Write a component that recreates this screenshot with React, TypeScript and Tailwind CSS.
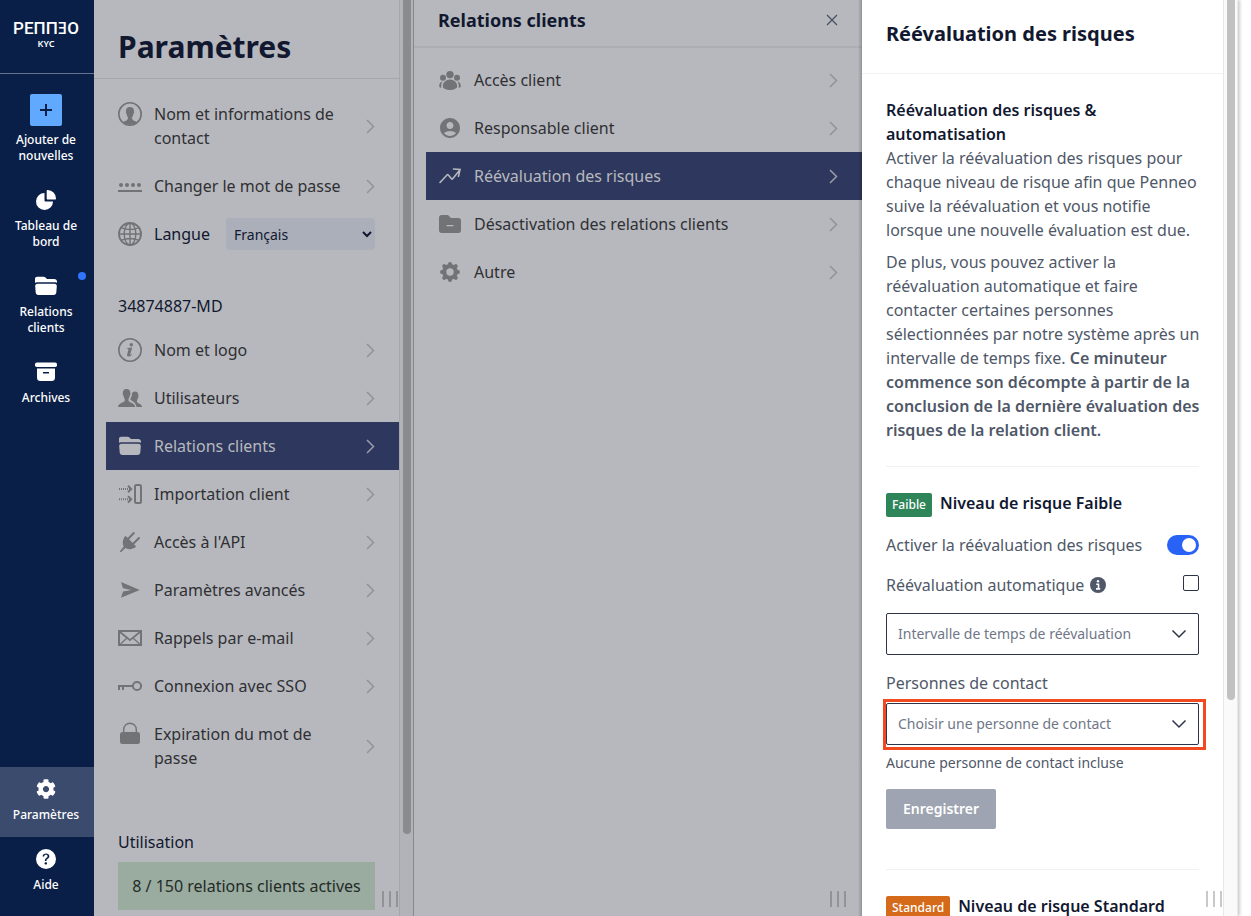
import React, { useState } from 'react';
import { FaCog } from 'react-icons/fa';
import { MdAccountCircle } from 'react-icons/md';
import { BsQuestionCircleFill } from 'react-icons/bs';

interface MenuItem {
  label: string;
  icon: React.ReactNode;
  active?: boolean;
}

const Svg = ({ children, size = 24 }: { children: React.ReactNode; size?: number }) => (
  <svg width={size} height={size} viewBox="0 0 24 24" fill="currentColor" aria-hidden="true">
    {children}
  </svg>
);

const FolderIcon = () => (
  <Svg>
    <path d="M1 8.700V5c0-1.400.9-2.300 2.300-2.300h6.200c.8 0 1.400.3 2 .9l1.500 1.500h7.200c1.700 0 2.800 1 2.800 2.600v1L21 8.300H3.200z" />
    <path d="M3.600 9.800h16.800c1.500 0 2.600 1 2.400 2.500l-.5 6.200c-.1 1.500-1.200 2.500-2.700 2.500H4.400c-1.500 0-2.600-1-2.700-2.500l-.5-6.200c-.2-1.500.9-2.500 2.400-2.500z" />
  </Svg>
);

const PieIcon = () => (
  <Svg>
    <path d="M10.500 5v7.500c0 .6.400 1 1 1H19A8.500 8.500 0 1 1 10.500 5z" />
    <path d="M12.700 3c0-.7.300-1 1-1A8.500 8.500 0 0 1 22 10.500c0 .7-.3 1-1 1h-7.300c-.7 0-1-.3-1-1z" />
  </Svg>
);

const ArchiveIcon = () => (
  <Svg>
    <rect x="1" y="2.500" width="22" height="4.600" rx="1.800" />
    <path fillRule="evenodd" d="M3 8.500h18v9a3.500 3.500 0 0 1-3.500 3.500h-11A3.500 3.500 0 0 1 3 17.500zm6 3.500v1.600h6V12z" />
  </Svg>
);

const AvatarIcon = () => (
  <Svg>
    <circle cx="12" cy="12" r="11.200" fill="none" stroke="currentColor" strokeWidth="1.600" />
    <path d="M12 5c-2.900 0-4.300 1.900-4 4.600-.4.700.1 2 .7 2.600.2 1.500.7 2.600 1.300 3.300-.1 1.300-.4 2.200-1.500 2.900-1.400.7-2.700 1-3.700 1.900A11 11 0 0 0 12 23a11 11 0 0 0 7.200-2.700c-1-.9-2.300-1.200-3.700-1.900-1.100-.7-1.400-1.600-1.500-2.900.6-.7 1.100-1.800 1.300-3.300.6-.6 1.100-1.900.7-2.600C16.300 6.900 14.900 5 12 5z" />
  </Svg>
);

const PasswordIcon = () => (
  <Svg>
    <circle cx="3" cy="11" r="2" />
    <circle cx="9" cy="11" r="2" />
    <circle cx="15" cy="11" r="2" />
    <circle cx="21" cy="11" r="2" />
    <rect y="16" width="24" height="2" />
  </Svg>
);

const GlobeIcon = () => (
  <Svg>
    <g fill="none" stroke="currentColor" strokeWidth="1.400">
      <circle cx="12" cy="12" r="11" strokeWidth="1.800" />
      <ellipse cx="12" cy="12" rx="5.800" ry="11" />
      <path d="M12 1v22M1 12h22M3.500 5.800c5 2 12 2 17 0M3.500 18.200c5-2 12-2 17 0" />
    </g>
  </Svg>
);

const InfoIcon = () => (
  <Svg>
    <circle cx="12" cy="12" r="11.200" fill="none" stroke="currentColor" strokeWidth="1.600" />
    <circle cx="13.300" cy="6.800" r="1.700" />
    <path d="M9.200 10l5-.6-2 7.200c-.1.500.2.600.6.300l1-1 .5.400c-1 1.500-2.200 2.200-3.500 2.200-1.500 0-2-.8-1.600-2.300l1.200-4.400c.2-.7 0-.9-1.400-1z" />
  </Svg>
);

const UsersIcon = () => (
  <Svg>
    <path d="M8.500 3C5.700 3 4.600 5 4.900 7.400c-.4.600 0 1.800.6 2.300.2 1.400.7 2.300 1.200 2.900v2.200C6.200 16.800.3 16.800 0 21h17.200c-.3-4.200-6-4.200-6.700-6.200v-2.200c.5-.6 1-1.500 1.200-2.900.6-.5 1-1.700.6-2.300C12.600 5 11.300 3 8.500 3z" />
    <path d="M16.800 5.500c-1.300 0-2.500.8-2.900 2.300.3 1.500-.1 2.600-.8 3.300-.2 1-.5 1.700-.9 2.200 1 1.800 5.400 2.300 6.400 7.700H24c-.2-3.500-4.500-3.300-5-5v-1.800c.4-.5.8-1.300.9-2.400.5-.4.800-1.400.5-1.900.2-2.500-1-4.400-3.600-4.400z" />
  </Svg>
);

const ImportIcon = () => (
  <Svg>
    <g fill="none" stroke="currentColor" strokeWidth="2">
      <rect x="17" y="3" width="6" height="18" rx="1.500" />
      <path d="M1 7h11M1 17.300h11" strokeDasharray="1 1" />
      <path d="M10 3.800L13.200 7 10 10.200M10 14.100l3.200 3.200-3.200 3.200" />
    </g>
  </Svg>
);

const PlugIcon = () => (
  <Svg>
    <path d="M6.500 7.300l9.900 9.900c-2.400 2.300-6.200 2.700-9 .9L3 22.300l-1.300-.8 4-5c-1.500-2.700-1.200-6.600.8-9.200z" />
    <path d="M10.500 8.500L15.800 3M15.500 13.500L21 8" fill="none" stroke="currentColor" strokeWidth="2" strokeLinecap="round" />
    <path d="M5.800 7.500l2-1.500 10.200 10.200-1.500 2z" />
  </Svg>
);

const PlaneIcon = () => (
  <Svg>
    <path d="M3 4l18.700 8L3 19.800l2-6.200 8.500-1.600L5 10.200z" />
  </Svg>
);

const MailIcon = () => (
  <Svg>
    <g fill="none" stroke="currentColor">
      <rect x="1" y="5" width="22" height="14" strokeWidth="2" />
      <path d="M2 6l10 8.200L22 6" strokeWidth="1.800" />
      <path d="M2.500 18L9 12M21.500 18L15 12" strokeWidth="1.200" />
    </g>
  </Svg>
);

const KeyIcon = () => (
  <Svg>
    <g fill="none" stroke="currentColor" strokeWidth="2">
      <circle cx="19" cy="12" r="4.100" />
      <path d="M0 12h14.800M1 12v4M5 12v4" />
    </g>
  </Svg>
);

const LockIcon = () => (
  <Svg>
    <rect x="2" y="10" width="20" height="12" rx="2.500" />
    <path d="M5.700 11V7.500a6.300 6.300 0 0 1 12.600 0V11" fill="none" stroke="currentColor" strokeWidth="1.400" />
  </Svg>
);

const GroupIcon = () => (
  <Svg>
    <circle cx="12" cy="6.600" r="3.700" />
    <circle cx="5" cy="9.700" r="3" />
    <circle cx="19" cy="9.700" r="3" />
    <path d="M12 11.500c4 0 7.200 3 7.200 6.700 0 2.600-4.200 3.800-7.200 3.800s-7.200-1.200-7.200-3.800c0-3.700 3.200-6.700 7.200-6.700z" />
    <path d="M4.600 13.600c-1.200 1.700-1.700 3.900-1.300 6.200-1.300-.2-2.100-.6-2.100-1.600 0-2.500 1.200-4.400 3.400-4.600zM19.400 13.600c1.200 1.700 1.700 3.900 1.300 6.200 1.300-.2 2.100-.6 2.100-1.600 0-2.500-1.200-4.400-3.400-4.600z" />
  </Svg>
);

const TrendIcon = () => (
  <Svg>
    <path
      d="M2 18.500l7-7.500c.5-.5.900-.4 1.300 0l3.200 3.800c.4.400.8.400 1.200 0L22 5.800M15.500 5l6.500.5-1.500 6.800"
      fill="none"
      stroke="currentColor"
      strokeWidth="1.600"
      strokeLinecap="round"
    />
  </Svg>
);

const FolderMinusIcon = () => (
  <Svg>
    <path fillRule="evenodd" d="M1 5.500C1 3.900 2.100 3 3.500 3H10l3 3h7.500C22 6 23 7 23 8.500v10c0 1.500-1 2.500-2.500 2.500h-17C2 21 1 20 1 18.500zM8.500 13v1.200h7V13z" />
  </Svg>
);

const GearIcon = () => (
  <Svg>
    <circle cx="12" cy="12" r="5.800" fill="none" stroke="currentColor" strokeWidth="4.200" />
    <path
      d="M12 4v1M12 19v1M4 12h1M19 12h1M6.200 6.200l.9.900M16.900 16.900l.9.900M17.800 6.200l-.9.900M7.100 16.900l-.9.900"
      fill="none"
      stroke="currentColor"
      strokeWidth="4"
      strokeLinecap="round"
    />
  </Svg>
);

const InfoBadge = () => (
  <svg width="16" height="16" viewBox="0 0 16 16" aria-hidden="true">
    <circle cx="8" cy="8" r="8" fill="currentColor" />
    <circle cx="8" cy="4.300" r="1.200" fill="#fff" />
    <path d="M6.200 7.300h2.300v4.400M6 11.900h4.200" fill="none" stroke="#fff" strokeWidth="1.600" />
  </svg>
);

const Chevron = () => (
  <svg width="9" height="16" viewBox="0 0 9 16" className="shrink-0 self-center" aria-hidden="true">
    <path d="M1 2l6.500 6.500L1 15" fill="none" stroke="currentColor" strokeWidth="1.500" />
  </svg>
);

const accountItems: MenuItem[] = [
  { label: 'Nom et informations de contact', icon: <AvatarIcon /> },
  { label: 'Changer le mot de passe', icon: <PasswordIcon /> },
];

const companyItems: MenuItem[] = [
  { label: 'Nom et logo', icon: <InfoIcon /> },
  { label: 'Utilisateurs', icon: <UsersIcon /> },
  { label: 'Relations clients', icon: <FolderIcon />, active: true },
  { label: 'Importation client', icon: <ImportIcon /> },
  { label: "Accès à l'API", icon: <PlugIcon /> },
  { label: 'Paramètres avancés', icon: <PlaneIcon /> },
  { label: 'Rappels par e-mail', icon: <MailIcon /> },
  { label: 'Connexion avec SSO', icon: <KeyIcon /> },
  { label: 'Expiration du mot de passe', icon: <LockIcon /> },
];

const clientItems: MenuItem[] = [
  { label: 'Accès client', icon: <GroupIcon /> },
  { label: 'Responsable client', icon: <MdAccountCircle size={24} /> },
  { label: 'Réévaluation des risques', icon: <TrendIcon />, active: true },
  { label: 'Désactivation des relations clients', icon: <FolderMinusIcon /> },
  { label: 'Autre', icon: <GearIcon /> },
];

const MenuRow = ({ item }: { item: MenuItem }) => (
  <a
    href="#"
    className={`ml-3 flex gap-3 py-3 pl-3 pr-6 ${
      item.active ? 'bg-[#2e385e] text-[#b7b8bd]' : 'text-[#2f3034]'
    }`}
  >
    <span className={`h-6 w-6 shrink-0 ${item.active ? 'text-[#b7b8bd]' : 'text-[#727377]'}`}>
      {item.icon}
    </span>
    <span className="flex-1 pr-3">{item.label}</span>
    <span className={`flex ${item.active ? 'text-[#9a9ca8]' : 'text-[#929397]'}`}>
      <Chevron />
    </span>
  </a>
);

const NavItem = ({ label, icon, active, dot }: MenuItem & { dot?: boolean }) => (
  <a
    href="#"
    className={`relative flex flex-col items-center gap-2 pb-3.5 pl-1 pr-1.5 pt-3 text-center ${
      active ? 'bg-[#3b4b6d]' : ''
    }`}
  >
    <span className="flex h-5 items-center">{icon}</span>
    <span>{label}</span>
    {dot && <span className="absolute right-2 top-2 h-2 w-2 rounded-full bg-[#2f74fb]" />}
  </a>
);

const Grip = ({ color = 'text-[#929397]' }: { color?: string }) => (
  <div className={`absolute bottom-[9px] right-px flex h-4 gap-[5px] ${color}`}>
    <span className="w-0.5 bg-current" />
    <span className="w-0.5 bg-current" />
    <span className="w-0.5 bg-current" />
  </div>
);

const Dropdown = ({ id, placeholder }: { id: string; placeholder: string }) => (
  <div className="relative">
    <select
      id={id}
      aria-label={placeholder}
      className="block h-[42px] w-full appearance-none rounded-xs border border-[#2d3448] bg-white px-[11px] text-sm text-[#6f7787]"
    >
      <option>{placeholder}</option>
    </select>
    <svg
      width="16"
      height="10"
      viewBox="0 0 16 10"
      className="pointer-events-none absolute right-3 top-4"
      aria-hidden="true"
    >
      <path d="M1.500 1.500L8 8l6.500-6.500" fill="none" stroke="#2d3448" strokeWidth="1.500" />
    </svg>
  </div>
);

const RiskHeading = ({ badge, color, title }: { badge: string; color: string; title: string }) => (
  <div className="flex items-start gap-2 pt-6">
    <span className={`mt-0.5 rounded-xs px-1.5 text-xs leading-6 font-medium text-white ${color}`}>{badge}</span>
    <h3 className="font-semibold text-[#111830]">{title}</h3>
  </div>
);

const App = () => {
  const [enabled, setEnabled] = useState(true);
  const [automatic, setAutomatic] = useState(false);
  const [language, setLanguage] = useState('fr');

  return (
    <div className="flex h-screen overflow-hidden bg-white font-['Noto_Sans',sans-serif] text-base text-[#111830]">
      {/* Main navigation */}
      <nav className="flex w-[94px] shrink-0 flex-col bg-[#0a1f48] pb-[9px] text-xs font-medium text-white">
        <div className="flex h-[74px] flex-col items-center border-b border-[#66738f] pr-0.5 pt-[18px]">
          <span className="font-['Roboto','Noto_Sans',sans-serif] text-[17px] font-medium leading-5">PEΠΠƎO</span>
          <span className="text-[9px] font-semibold leading-3">KYC</span>
        </div>
        <a href="#" className="mt-5 flex flex-col items-center gap-1.5 pb-3.5 pl-1 pr-1.5 text-center">
          <span className="flex h-8 w-8 items-center justify-center rounded-xs bg-[#60a9ff] text-[#0a1f48]">
            <svg width="14" height="14" viewBox="0 0 14 14" aria-hidden="true">
              <path d="M7 1v12M1 7h12" stroke="currentColor" strokeWidth="2" />
            </svg>
          </span>
          <span>Ajouter de nouvelles</span>
        </a>
        <NavItem label="Tableau de bord" icon={<PieIcon />} />
        <NavItem label="Relations clients" icon={<FolderIcon />} dot />
        <NavItem label="Archives" icon={<ArchiveIcon />} />
        <div className="mt-auto">
          <NavItem label="Paramètres" icon={<FaCog size={20} />} active />
          <NavItem label="Aide" icon={<BsQuestionCircleFill size={20} />} />
        </div>
      </nav>

      {/* Settings */}
      <section className="flex w-80 shrink-0 bg-[#b7b8bd]">
        <div className="relative flex-1">
          <header className="flex h-[79px] items-center border-b border-[#a5a6ab] px-6 pt-4">
            <h1 className="text-3xl font-bold">Paramètres</h1>
          </header>
          <div className="pt-[11px]">
            {accountItems.map((item) => (
              <MenuRow key={item.label} item={item} />
            ))}
            <div className="flex h-12 items-center gap-3 px-6">
              <span className="text-[#727377]">
                <GlobeIcon />
              </span>
              <label htmlFor="language">Langue</label>
              <select
                id="language"
                value={language}
                onChange={(e) => setLanguage(e.target.value)}
                className="ml-1 h-8 min-w-0 flex-1 rounded-sm bg-[#abafb9] px-1 text-sm"
              >
                <option value="fr">Français</option>
                <option value="en">English</option>
                <option value="da">Dansk</option>
              </select>
            </div>
            <h2 className="mb-2 mt-9 px-6">34874887-MD</h2>
            {companyItems.map((item) => (
              <MenuRow key={item.label} item={item} />
            ))}
            <div className="px-6 pt-12">
              <h2 className="mb-2">Utilisation</h2>
              <p className="bg-[#9aab9f] py-3 text-center text-[#232b28]">8 / 150 relations clients actives</p>
            </div>
          </div>
          <Grip />
        </div>
        <div className="w-[15px] border-l border-r border-l-[#a5a6ab] border-r-[#86878b] bg-[#b2b3b8] pl-[3px]">
          <div className="h-[834px] w-2 rounded-b-full bg-[#8a8b8f]" />
        </div>
      </section>

      {/* Client relations */}
      <section className="relative min-w-0 flex-1 bg-[#b7b8bd]">
        <header className="mb-2 flex h-12 items-start justify-between border-b-2 border-[#adaeb3] pl-6 pr-6 pt-1.5">
          <h2 className="text-lg font-bold leading-7">Relations clients</h2>
          <button type="button" aria-label="Fermer" className="flex h-7 items-center text-[#4a5064]">
            <svg width="12" height="12" viewBox="0 0 12 12" aria-hidden="true">
              <path d="M1 1l10 10M11 1L1 11" stroke="currentColor" strokeWidth="1.300" />
            </svg>
          </button>
        </header>
        {clientItems.map((item) => (
          <MenuRow key={item.label} item={item} />
        ))}
        <div className="absolute inset-y-0 right-0 w-1 bg-linear-to-r from-transparent to-black/20" />
        <div className="absolute bottom-0 right-[15px] h-8 w-5">
          <Grip />
        </div>
      </section>

      {/* Risk reassessment */}
      <section className="flex w-[376px] shrink-0 shadow-[2px_0_3px_rgba(0,0,0,0.2)]">
        <div className="relative min-w-0 flex-1">
          <header className="h-[74px] border-b border-[#f0f1f3] px-6 pt-5">
            <h2 className="text-xl font-bold leading-7">Réévaluation des risques</h2>
          </header>
          <div className="px-6 pt-6 text-[#4f5868]">
            <h3 className="font-semibold text-[#111830]">Réévaluation des risques & automatisation</h3>
            <p className="mb-2">
              Activer la réévaluation des risques pour chaque niveau de risque afin que Penneo suive la
              réévaluation et vous notifie lorsque une nouvelle évaluation est due.
            </p>
            <p className="-mr-2 mb-6">
              De plus, vous pouvez activer la réévaluation automatique et faire contacter certaines personnes
              sélectionnées par notre système après un intervalle de temps fixe.{' '}
              <strong className="font-semibold">
                Ce minuteur commence son décompte à partir de la conclusion de la dernière évaluation des
                risques de la relation client.
              </strong>
            </p>

            <hr className="border-[#f0f1f3]" />
            <RiskHeading badge="Faible" color="bg-[#2f855a]" title="Niveau de risque Faible" />
            <div className="mt-4 flex items-center justify-between">
              <label htmlFor="enable-risk">Activer la réévaluation des risques</label>
              <span className="relative flex">
                <input
                  id="enable-risk"
                  type="checkbox"
                  role="switch"
                  checked={enabled}
                  onChange={(e) => setEnabled(e.target.checked)}
                  className="peer h-5 w-8 appearance-none rounded-full bg-gray-400 checked:bg-[#2962f6]"
                />
                <span className="pointer-events-none absolute left-[3px] top-[3px] h-3.5 w-3.5 rounded-full bg-white peer-checked:left-[15px]" />
              </span>
            </div>
            <div className="mt-4 flex items-start justify-between">
              <label htmlFor="auto-risk" className="flex items-center gap-1.5">
                Réévaluation automatique
                <InfoBadge />
              </label>
              <input
                id="auto-risk"
                type="checkbox"
                checked={automatic}
                onChange={(e) => setAutomatic(e.target.checked)}
                className="mt-0.5 h-4 w-4 appearance-none rounded-xs border border-[#2d3448] bg-white checked:bg-[#2962f6]"
              />
            </div>
            <div className="mt-4">
              <Dropdown id="interval" placeholder="Intervalle de temps de réévaluation" />
            </div>
            <label htmlFor="contact" className="mb-2 mt-4 block">
              Personnes de contact
            </label>
            <div className="relative">
              <Dropdown id="contact" placeholder="Choisir une personne de contact" />
              <div className="pointer-events-none absolute -bottom-[5px] -left-[3px] -right-[7px] -top-1 border-[3px] border-[#f14a20]" />
            </div>
            <p className="mb-4 mt-2 text-sm">Aucune personne de contact incluse</p>
            <button
              type="button"
              className="mb-10 block h-10 rounded-xs bg-[#9ea4b1] px-[17px] text-sm font-semibold text-white"
            >
              Enregistrer
            </button>
            <hr className="border-[#f0f1f3]" />
            <RiskHeading badge="Standard" color="bg-[#d56b1a]" title="Niveau de risque Standard" />
          </div>
          <Grip color="text-[#c8c9cb]" />
        </div>
        <div className="w-[15px] border-l border-r border-[#e8e8e8] bg-[#fafafa] pl-[3px]">
          <div className="h-[700px] w-2 rounded-b-full bg-[#c1c1c1]" />
        </div>
      </section>
      <div className="w-[13px] shrink-0" />
    </div>
  );
};

export default App;
